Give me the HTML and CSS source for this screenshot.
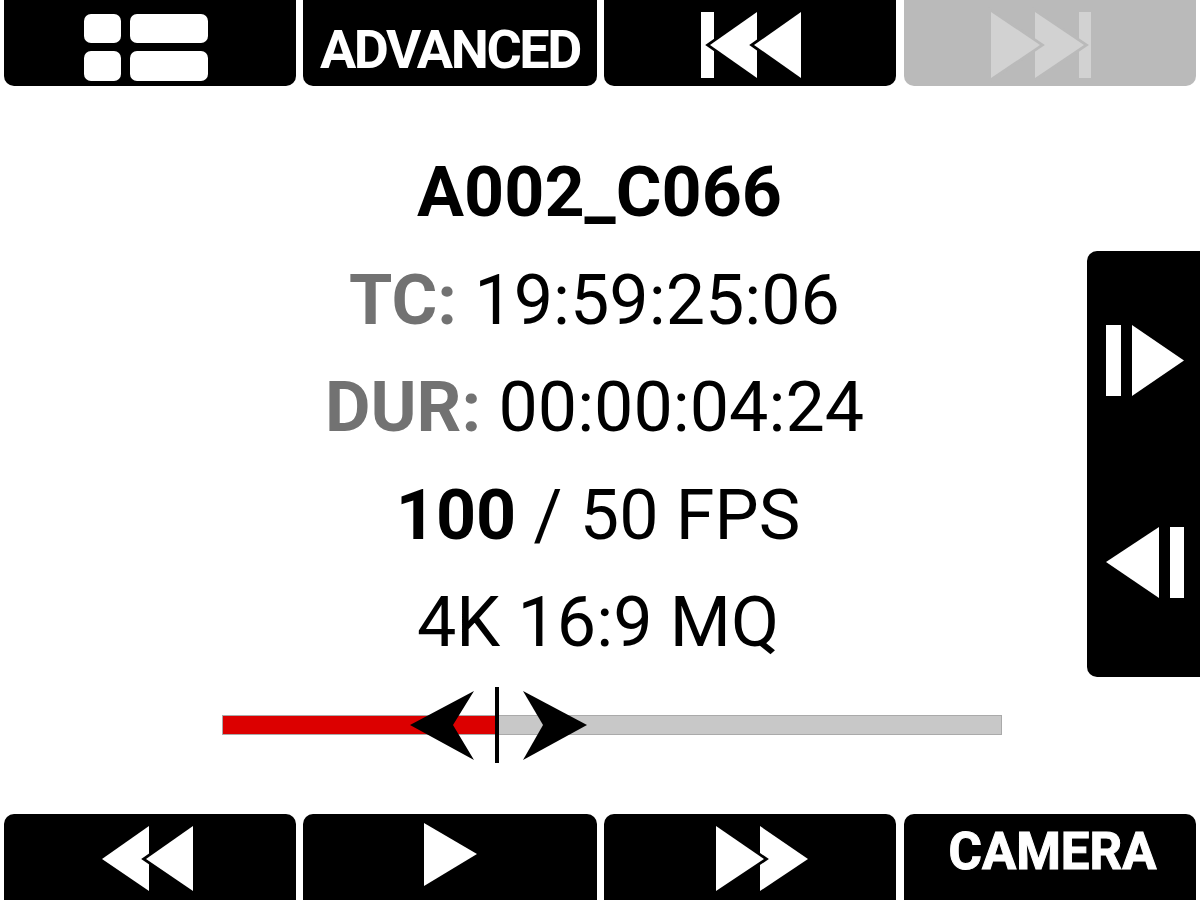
FILE: index.html
```html
<!DOCTYPE html>
<html lang="en">
<head>
    <meta charset="UTF-8">
    <title>Clip Playback</title>
    <link rel="stylesheet" href="styles.css">
</head>
<body>
    <div class="screen">
        <div class="btn-row top-row">
            <div class="btn btn-1">
                <svg class="icon" viewBox="0 0 292 86">
                    <rect x="80" y="14" width="37" height="29" rx="7"/>
                    <rect x="126" y="14" width="78" height="29" rx="7"/>
                    <rect x="80" y="51" width="37" height="30" rx="7"/>
                    <rect x="126" y="51" width="78" height="30" rx="7"/>
                </svg>
            </div>
            <div class="btn btn-2"><span class="btn-label label-advanced">ADVANCED</span></div>
            <div class="btn btn-3">
                <svg class="icon" viewBox="0 0 292 86">
                    <rect x="97" y="12" width="13" height="66"/>
                    <polygon class="tri" points="106,45 153,12 153,78"/>
                    <polygon class="tri" points="150,45 197,12 197,78"/>
                </svg>
            </div>
            <div class="btn btn-4 disabled">
                <svg class="icon" viewBox="0 0 292 86">
                    <rect x="175" y="12" width="12" height="66"/>
                    <polygon class="tri" points="131,12 180,45 131,78"/>
                    <polygon class="tri" points="87,12 136,45 87,78"/>
                </svg>
            </div>
        </div>

        <div class="info">
            <div class="line clip-name">A002_C066</div>
            <div class="line timecode"><b class="key">TC:</b> 19:59:25:06</div>
            <div class="line timecode"><b class="key">DUR:</b> 00:00:04:24</div>
            <div class="line"><b>100</b> / 50 FPS</div>
            <div class="line">4K 16:9 MQ</div>
        </div>

        <div class="slider">
            <div class="slider-fill"></div>
            <svg class="slider-thumb" viewBox="0 0 180 76">
                <polygon points="2,38 66,4 45,38 66,73"/>
                <rect x="87" y="0" width="4" height="76"/>
                <polygon points="115,4 179,38 135,38"/>
                <polygon points="115,73 179,38 135,38"/>
            </svg>
        </div>

        <div class="btn-row bottom-row">
            <div class="btn btn-1">
                <svg class="icon" viewBox="0 0 292 86">
                    <polygon class="tri" points="98,45 145,12 145,77"/>
                    <polygon class="tri" points="142,45 189,12 189,77"/>
                </svg>
            </div>
            <div class="btn btn-2">
                <svg class="icon" viewBox="0 0 294 86">
                    <polygon points="121,9 174,40 121,72"/>
                </svg>
            </div>
            <div class="btn btn-3">
                <svg class="icon" viewBox="0 0 292 86">
                    <polygon class="tri" points="156,12 204,45 156,77"/>
                    <polygon class="tri" points="112,12 160,45 112,77"/>
                </svg>
            </div>
            <div class="btn btn-4"><span class="btn-label label-camera">CAMERA</span></div>
        </div>

        <div class="side-panel">
            <svg class="side-icon" viewBox="0 0 113 426">
                <rect x="19" y="74" width="15" height="71"/>
                <polygon points="45,74 97,109.5 45,145"/>
                <polygon points="19,311 72,276 72,347"/>
                <rect x="83" y="276" width="14" height="71"/>
            </svg>
        </div>
    </div>
</body>
</html>
```

FILE: styles.css
```css
html, body {
    margin: 0;
    padding: 0;
}

body {
    font-family: Roboto, sans-serif;
    color: #000;
    background: #fff;
}

.screen {
    position: relative;
    width: 1200px;
    height: 900px;
    overflow: hidden;
    display: flex;
    flex-direction: column;
}

/* Button rows */
.btn-row {
    display: flex;
    height: 86px;
    padding: 0 4px;
    flex: none;
}

.btn {
    background: #000;
    color: #fff;
    display: flex;
    align-items: center;
    justify-content: center;
    height: 100%;
}

.btn-1 { width: 292px; margin-right: 7px; }
.btn-2 { width: 294px; margin-right: 7px; }
.btn-3 { width: 292px; margin-right: 8px; }
.btn-4 { width: 292px; }

.top-row .btn { border-radius: 0 0 10px 10px; }
.bottom-row .btn { border-radius: 10px 10px 0 0; }

.icon {
    display: block;
    width: 100%;
    height: 100%;
    fill: #fff;
}

.tri {
    stroke: #000;
    stroke-width: 5.5px;
    paint-order: stroke;
}

.disabled { background: #bababa; }
.disabled .icon { fill: #d2d2d2; }
.disabled .tri { stroke: #bababa; }

.btn-label {
    font-weight: 700;
    white-space: nowrap;
    line-height: 1;
}

.label-advanced {
    font-size: 54px;
    letter-spacing: -2.4px;
    padding-top: 14px;
}

.label-camera {
    font-size: 51px;
    -webkit-text-stroke: 1px #fff;
    margin-left: 5px;
    padding-bottom: 11px;
}

/* Clip info */
.info {
    width: 1196px;
    margin-top: 53px;
    text-align: center;
    font-size: 70px;
}

.line {
    height: 107.5px;
    line-height: 107.5px;
    white-space: nowrap;
}

.clip-name {
    font-weight: 700;
    padding-left: 3px;
}

.timecode { padding-right: 7px; }

.key { color: #727272; }

/* Timeline */
.slider {
    position: relative;
    box-sizing: border-box;
    width: 780px;
    height: 20px;
    margin: 38.5px 0 79px 222px;
    background: #c8c8c8;
    border: 1px solid #aaa;
    flex: none;
}

.slider-fill {
    width: 274px;
    height: 100%;
    background: #dc0000;
}

.slider-thumb {
    position: absolute;
    left: 185px;
    top: -29px;
    width: 180px;
    height: 76px;
    fill: #000;
}

/* Frame step panel */
.side-panel {
    position: absolute;
    right: 0;
    top: 251px;
    width: 113px;
    height: 426px;
    background: #000;
    border-radius: 10px 0 0 10px;
}

.side-icon {
    display: block;
    width: 100%;
    height: 100%;
    fill: #fff;
}
```
